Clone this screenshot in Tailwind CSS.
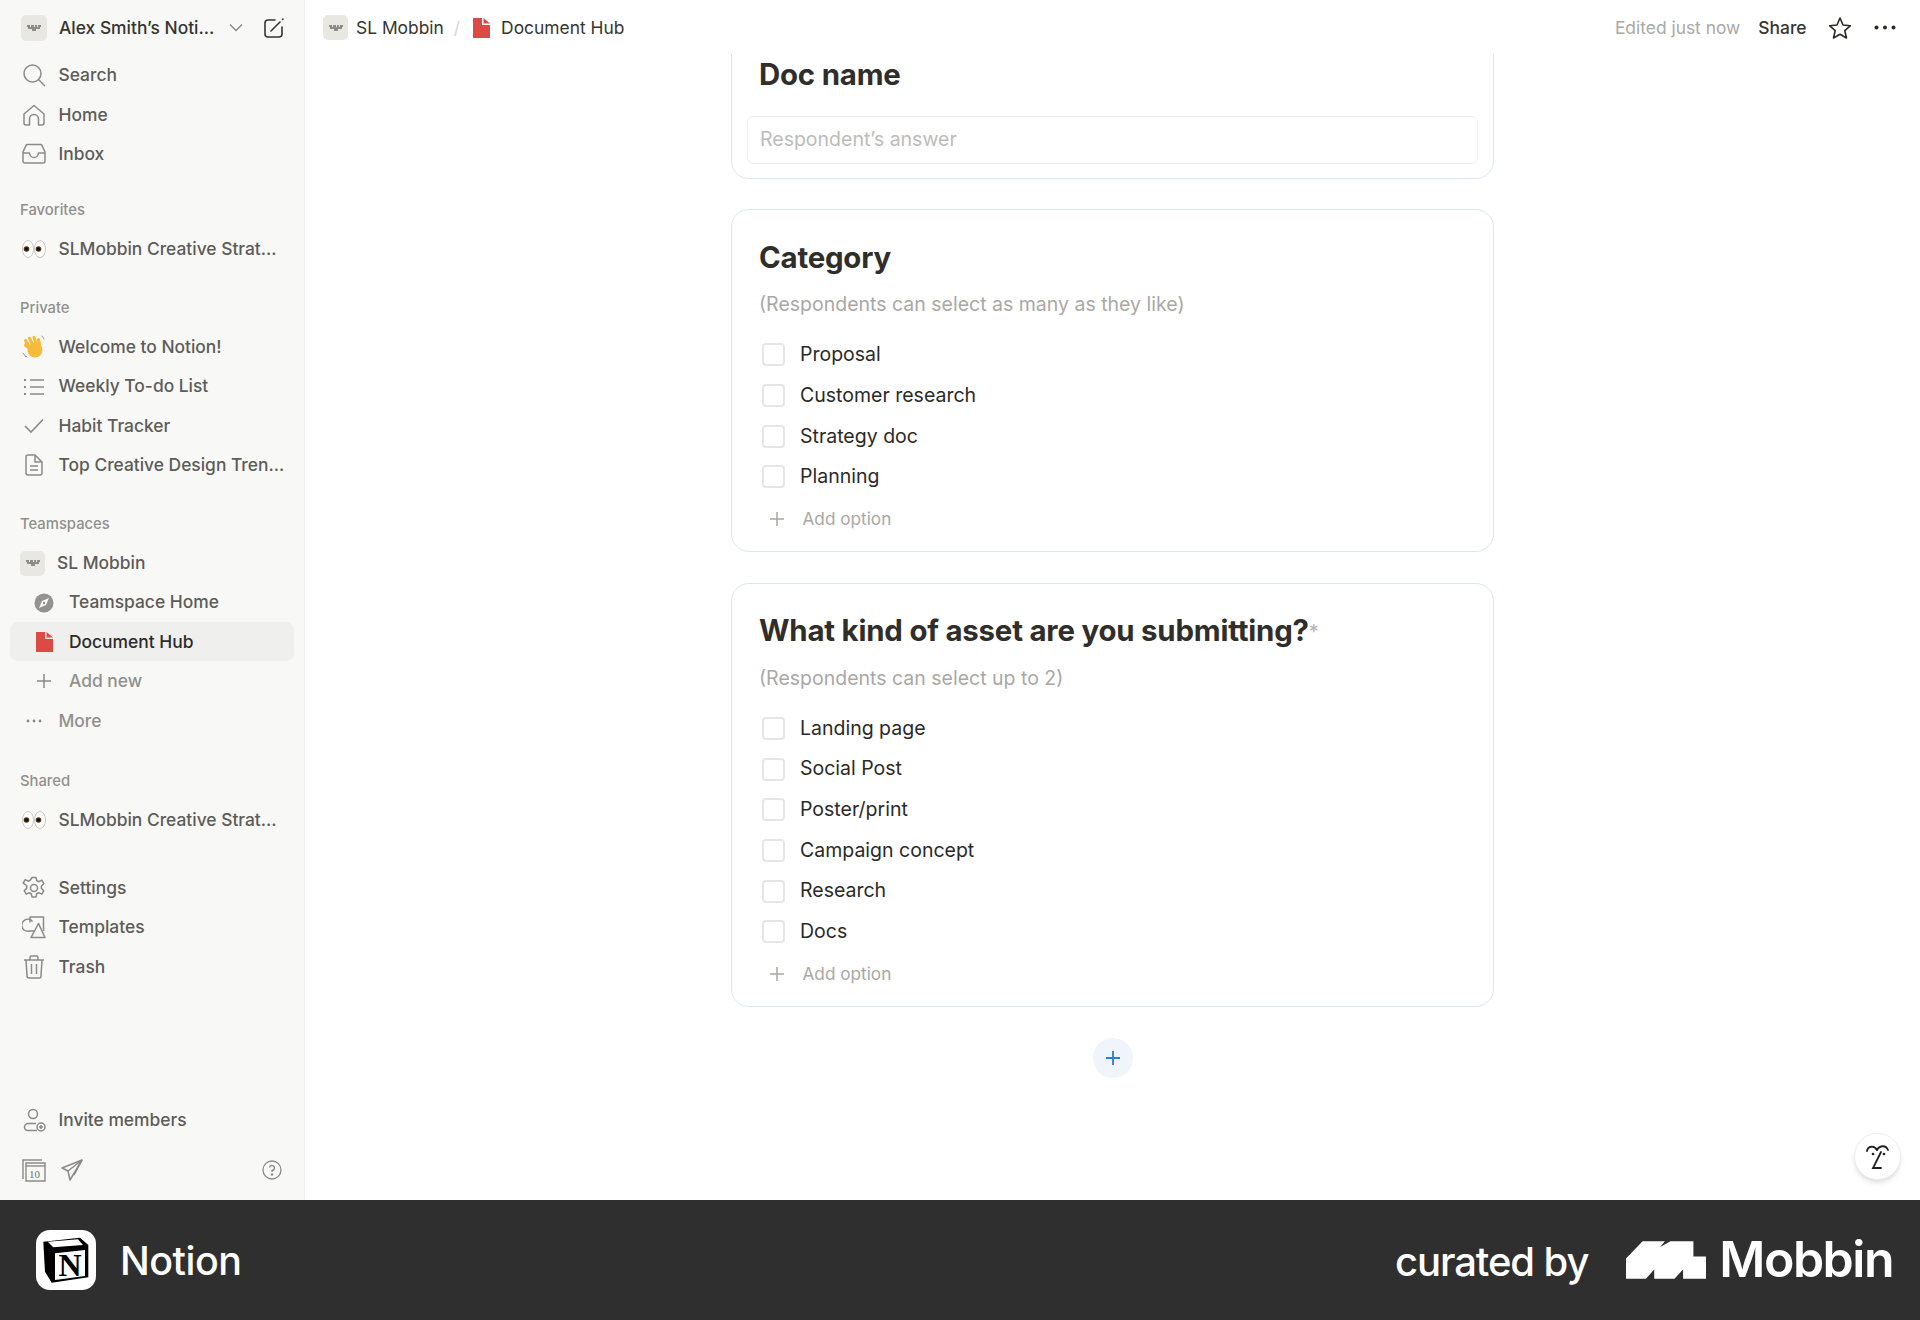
<!DOCTYPE html>
<html lang="en">
<head>
    <meta charset="UTF-8">
    <title>Document Hub</title>
    <script src="https://cdn.jsdelivr.net/npm/@tailwindcss/browser@4"></script>
</head>
<body class="font-['Inter',sans-serif] bg-white w-[1920px] h-[1320px] overflow-hidden flex flex-col antialiased">
<div class="flex h-[1200px]">
    <!-- sidebar -->
    <aside class="w-[305px] shrink-0 h-full bg-[#f8f8f7] border-r border-[#f1f1f0] flex flex-col text-[17.4px] font-medium text-[#5d5c58]">
        <div class="h-[55.500px] flex items-center pl-[21px] text-[#37352f]">
            <div class="w-[26px] h-[26px] rounded-[5px] bg-[#e8e7e1] flex items-center justify-center">
                <svg width="14" height="6" viewBox="0 0 14 6"><path d="M0 1h3M4 1h3M8 1h2M11 1h3M1 3h12M5 5h4" stroke="#333" stroke-width="1.2" fill="none"/></svg>
            </div>
            <span class="ml-[12px] w-[157px] whitespace-nowrap">Alex Smith’s Noti...</span>
            <svg class="ml-[13px]" width="14" height="9" viewBox="0 0 14 9" fill="none" stroke="#8b8a87" stroke-width="1.4"><path d="M1 1.5l6 6 6-6"/></svg>
            <svg class="ml-[20px]" width="22" height="22" viewBox="0 0 22 22" fill="none" stroke="#37352f" stroke-width="1.6" stroke-linecap="round"><path d="M12 3H5a3 3 0 0 0-3 3v11a3 3 0 0 0 3 3h11a3 3 0 0 0 3-3v-7"/><path d="M8 14L17 5"/><path d="M19.5 2.5l.5-.5"/></svg>
        </div>

        <a class="h-[39.6px] mx-[10px] pl-[10px] flex items-center gap-[10.5px]">
            <span class="w-[28px] flex justify-center"><svg width="24" height="24" viewBox="0 0 24 24" fill="none" stroke="#8b8a87" stroke-width="1.5"><circle cx="10.5" cy="10.5" r="8.5"/><path d="M16.5 16.5l6.5 6.5"/></svg></span>Search</a>
        <a class="h-[39.6px] mx-[10px] pl-[10px] flex items-center gap-[10.5px]">
            <span class="w-[28px] flex justify-center"><svg width="24" height="24" viewBox="0 0 24 24" fill="none" stroke="#8b8a87" stroke-width="1.5" stroke-linejoin="round"><path d="M2 11L12 2.5 22 11v9a2 2 0 0 1-2 2h-3.5v-6a4.5 4.5 0 0 0-9 0v6H4a2 2 0 0 1-2-2z"/></svg></span>Home</a>
        <a class="h-[39.6px] mx-[10px] pl-[10px] flex items-center gap-[10.5px]">
            <span class="w-[28px] flex justify-center"><svg width="24" height="24" viewBox="0 0 24 24" fill="none" stroke="#8b8a87" stroke-width="1.5" stroke-linejoin="round"><path d="M1 10l3-6.5a1.5 1.5 0 0 1 1.4-.9h13.2a1.5 1.5 0 0 1 1.4.9L23 10v9a2 2 0 0 1-2 2H3a2 2 0 0 1-2-2z"/><path d="M1 11h6.5c.5 3 2 4.5 4.5 4.5s4-1.500 4.500-4.500H23"/></svg></span>Inbox</a>

        <div class="mt-[16.300px] h-[39px] pl-[20px] flex items-center text-[14.8px] text-[#91908c]">Favorites</div>
        <a class="h-[39.2px] mx-[10px] pl-[10px] flex items-center gap-[10.5px]">
            <span class="w-[28px] flex justify-center"><svg width="26" height="22" viewBox="0 0 26 22"><ellipse cx="7" cy="11" rx="5.500" ry="8.500" fill="#fff" stroke="#c9c8c4" stroke-width="1"/><ellipse cx="19" cy="11" rx="5.500" ry="8.500" fill="#fff" stroke="#c9c8c4" stroke-width="1"/><circle cx="5.500" cy="11" r="2.800" fill="#5a3416"/><circle cx="5.500" cy="11" r="1.700" fill="#111"/><circle cx="17.500" cy="11" r="2.800" fill="#5a3416"/><circle cx="17.500" cy="11" r="1.700" fill="#111"/></svg></span>SLMobbin Creative Strat...</a>

        <div class="mt-[20px] h-[39px] pl-[20px] flex items-center text-[14.8px] text-[#91908c]">Private</div>
        <a class="h-[39.2px] mx-[10px] pl-[10px] flex items-center gap-[10.5px]">
            <span class="w-[28px] flex justify-center"><svg width="24" height="24" viewBox="0 0 24 24" fill="none" stroke-linecap="round"><path d="M6.500 10.500L3.500 5.500M10 8.500L7.500 3.500M14 8L12 2.500M17.500 9.500L16.500 4.500" stroke="#f7bb3c" stroke-width="3.200"/><ellipse cx="13" cy="15" rx="7.500" ry="7.500" fill="#f7bb3c"/><path d="M7 13L3.500 10" stroke="#f7bb3c" stroke-width="3.200"/><path d="M1 18l3 4M4 21l1 1M20 1l2 3" stroke="#9a9a96" stroke-width="1"/></svg></span>Welcome to Notion!</a>
        <a class="h-[39.2px] mx-[10px] pl-[10px] flex items-center gap-[10.5px]">
            <span class="w-[28px] flex justify-center"><svg width="22" height="18" viewBox="0 0 22 18" fill="none" stroke="#8b8a87" stroke-width="1.500"><path d="M7 2h14M7 9h14M7 16h14"/><path d="M1 2h2M1 9h2M1 16h2" stroke-width="2"/></svg></span>Weekly To-do List</a>
        <a class="h-[39.2px] mx-[10px] pl-[10px] flex items-center gap-[10.5px]">
            <span class="w-[28px] flex justify-center"><svg width="20" height="16" viewBox="0 0 20 16" fill="none" stroke="#8b8a87" stroke-width="1.600"><path d="M1 8l6 6L19 1.500"/></svg></span>Habit Tracker</a>
        <a class="h-[39.2px] mx-[10px] pl-[10px] flex items-center gap-[10.5px]">
            <span class="w-[28px] flex justify-center"><svg width="18" height="22" viewBox="0 0 18 22" fill="none" stroke="#8b8a87" stroke-width="1.500" stroke-linejoin="round"><path d="M3 1h7l7 7v11a2 2 0 0 1-2 2H3a2 2 0 0 1-2-2V3a2 2 0 0 1 2-2z"/><path d="M10 1v7h7M5 12h8M5 16h8"/></svg></span>Top Creative Design Tren...</a>

        <div class="mt-[20px] h-[39px] pl-[20px] flex items-center text-[14.8px] text-[#91908c]">Teamspaces</div>
        <a class="h-[39.2px] pl-[20px] flex items-center gap-[12px]">
            <span class="w-[25px] h-[25px] rounded-[5px] bg-[#e8e7e1] flex items-center justify-center"><svg width="14" height="6" viewBox="0 0 14 6"><path d="M0 1h3M4 1h3M8 1h2M11 1h3M1 3h12M5 5h4" stroke="#333" stroke-width="1.200" fill="none"/></svg></span>SL Mobbin</a>
        <a class="h-[39.6px] mx-[10px] pl-[24px] flex items-center gap-[15px]">
            <svg width="20" height="20" viewBox="0 0 20 20"><circle cx="10" cy="10" r="9.500" fill="#93928e"/><path d="M15 5l-7 3-3 7 7-3z" fill="#f8f8f7"/><circle cx="10" cy="10" r="1.200" fill="#93928e"/></svg>Teamspace Home</a>
        <a class="h-[39.2px] mx-[10px] pl-[26px] flex items-center gap-[16px] rounded-[8px] bg-[#efefee] text-[#2c2b28]">
            <svg width="17" height="20" viewBox="0 0 17 20"><path d="M0 0h9v7h8v13H0z" fill="#dc4a46"/><path d="M10.500 0L17 5.500h-6.500z" fill="#dc4a46"/></svg>Document Hub</a>
        <a class="h-[40px] mx-[10px] pl-[24px] flex items-center gap-[15px] text-[#91908c]">
            <svg width="20" height="20" viewBox="0 0 20 20" fill="none" stroke="#8b8a87" stroke-width="1.500"><path d="M10 3v14M3 10h14"/></svg>Add new</a>
        <a class="h-[40px] mx-[10px] pl-[10px] flex items-center gap-[10.5px] text-[#91908c]">
            <span class="w-[28px] flex justify-center"><svg width="16" height="4" viewBox="0 0 16 4" fill="#8b8a87"><circle cx="2" cy="2" r="1.400"/><circle cx="8" cy="2" r="1.400"/><circle cx="14" cy="2" r="1.400"/></svg></span>More</a>

        <div class="mt-[20px] h-[39px] pl-[20px] flex items-center text-[14.8px] text-[#91908c]">Shared</div>
        <a class="h-[39.2px] mx-[10px] pl-[10px] flex items-center gap-[10.5px]">
            <span class="w-[28px] flex justify-center"><svg width="26" height="22" viewBox="0 0 26 22"><ellipse cx="7" cy="11" rx="5.500" ry="8.500" fill="#fff" stroke="#c9c8c4" stroke-width="1"/><ellipse cx="19" cy="11" rx="5.500" ry="8.500" fill="#fff" stroke="#c9c8c4" stroke-width="1"/><circle cx="5.500" cy="11" r="2.800" fill="#5a3416"/><circle cx="5.500" cy="11" r="1.700" fill="#111"/><circle cx="17.500" cy="11" r="2.800" fill="#5a3416"/><circle cx="17.500" cy="11" r="1.700" fill="#111"/></svg></span>SLMobbin Creative Strat...</a>

        <a class="mt-[29px] h-[39.2px] mx-[10px] pl-[10px] flex items-center gap-[10.5px]">
            <span class="w-[28px] flex justify-center"><svg width="24" height="24" viewBox="0 0 24 24" fill="none" stroke="#8b8a87" stroke-width="1.500" stroke-linejoin="round"><circle cx="12" cy="12" r="3.500"/><path d="M10 1.500h4l.7 3.200 2.200 1 2.900-1.500 2 3.500-2.400 2.300v2.400l2.400 2.300-2 3.500-2.900-1.500-2.200 1-.7 3.200h-4l-.7-3.200-2.200-1-2.900 1.500-2-3.500 2.400-2.300V9.500L1.200 7.200l2-3.500 2.900 1.500 2.200-1z"/></svg></span>Settings</a>
        <a class="h-[39.2px] mx-[10px] pl-[10px] flex items-center gap-[10.5px]">
            <span class="w-[28px] flex justify-center"><svg width="24" height="24" viewBox="0 0 24 24" fill="none" stroke="#8b8a87" stroke-width="1.500" stroke-linejoin="round"><path d="M8 7.500V2h13.500v14"/><path d="M13.500 16H7.500a6 6 0 1 1 3-9.500"/><path d="M16.500 8.500l6.500 14H9z" fill="#f8f8f7"/></svg></span>Templates</a>
        <a class="h-[39.2px] mx-[10px] pl-[10px] flex items-center gap-[10.5px]">
            <span class="w-[28px] flex justify-center"><svg width="22" height="24" viewBox="0 0 22 24" fill="none" stroke="#8b8a87" stroke-width="1.500" stroke-linejoin="round"><path d="M1 5h20M7 5V2.500A1.500 1.500 0 0 1 8.500 1h5A1.500 1.500 0 0 1 15 2.500V5"/><path d="M3 5l1 16a2 2 0 0 0 2 2h10a2 2 0 0 0 2-2l1-16M8.500 9v10M13.500 9v10"/></svg></span>Trash</a>

        <a class="mt-auto h-[39.2px] mx-[10px] pl-[10px] flex items-center gap-[10.5px]">
            <span class="w-[28px] flex justify-center"><svg width="24" height="24" viewBox="0 0 24 24" fill="none" stroke="#8b8a87" stroke-width="1.500"><circle cx="11" cy="6" r="4.500"/><path d="M14 15.500H6a3.500 3.500 0 0 0 0 7h9"/><circle cx="19" cy="19" r="4"/><path d="M19 17v4M17 19h4"/></svg></span>Invite members</a>
        <div class="mt-[10px] mb-[10px] h-[40px] pl-[22px] pr-[22px] flex items-center">
            <svg width="24" height="24" viewBox="0 0 24 24" fill="none" stroke="#8b8a87" stroke-width="1.400"><path d="M1 21V2h19"/><path d="M4 5h19v18H4z"/><path d="M4 8h19"/><text x="7" y="20" font-family="Liberation Serif" font-size="11" fill="#6f6e6a" stroke="none">10</text></svg>
            <svg class="ml-[15px]" width="22" height="22" viewBox="0 0 22 22" fill="none" stroke="#8b8a87" stroke-width="1.500" stroke-linejoin="round"><path d="M21 1L1 9l6 3 2 9z"/><path d="M21 1L7 12M21 1L13 16"/></svg>
            <svg class="ml-auto" width="20" height="20" viewBox="0 0 20 20" fill="none" stroke="#8b8a87" stroke-width="1.300"><circle cx="10" cy="10" r="9"/><path d="M7.500 7.500A2.500 2.500 0 1 1 10 10.500V12"/><circle cx="10" cy="14.500" r=".6" fill="#8b8a87"/></svg>
        </div>
    </aside>

    <!-- main -->
    <main class="flex-1 h-full relative flex flex-col min-w-0">
        <header class="h-[54px] pt-[1.500px] shrink-0 bg-white flex items-center pl-[18px] pr-[24px] text-[17.4px] text-[#37352f] relative z-10">
            <span class="w-[25px] h-[25px] rounded-[5px] bg-[#e8e7e1] flex items-center justify-center"><svg width="14" height="6" viewBox="0 0 14 6"><path d="M0 1h3M4 1h3M8 1h2M11 1h3M1 3h12M5 5h4" stroke="#333" stroke-width="1.200" fill="none"/></svg></span>
            <span class="ml-[8px]">SL Mobbin</span>
            <span class="ml-[10px] text-[#d5d4d1]">/</span>
            <svg class="ml-[13px]" width="17" height="20" viewBox="0 0 17 20"><path d="M0 0h9v7h8v13H0z" fill="#dc4a46"/><path d="M10.500 0L17 5.500h-6.500z" fill="#dc4a46"/></svg>
            <span class="ml-[11px]">Document Hub</span>
            <span class="ml-auto text-[#aaa9a6]">Edited just now</span>
            <span class="ml-[18px] font-medium">Share</span>
            <svg class="ml-[21.500px]" width="24" height="24" viewBox="0 0 24 24" fill="none" stroke="#2b2a27" stroke-width="1.600" stroke-linejoin="round"><path d="M12 2l3 7 7.500.7-5.700 5 1.700 7.300L12 18.200 5.500 22l1.700-7.300-5.700-5L9 9z"/></svg>
            <svg class="ml-[22px]" width="22" height="5" viewBox="0 0 22 5" fill="#2b2a27"><circle cx="2.500" cy="2.500" r="2"/><circle cx="11" cy="2.500" r="2"/><circle cx="19.500" cy="2.500" r="2"/></svg>
        </header>

        <div class="flex-1 overflow-hidden">
            <div class="w-[763px] ml-[426px] -mt-[29px] text-[19.5px]">
                <section class="h-[154px] border border-[#d9e6f5] rounded-[18px] flex flex-col justify-end px-[15px] pb-[14.500px]">
                    <h2 class="px-[12px] text-[29.4px] leading-[36px] font-bold tracking-[-0.2px] text-[#2f2e2b] mb-[22.500px]">Doc name</h2>
                    <div class="h-[48px] border border-[#eeeeec] rounded-[6px] px-[12px] flex items-center text-[#bdbcb9]">Respondent’s answer</div>
                </section>

                <section class="mt-[30px] h-[343px] border border-[#d9e6f5] rounded-[18px] px-[27px] pt-[29.500px]">
                    <h2 class="text-[29.4px] leading-[36px] font-bold tracking-[-0.2px] text-[#2f2e2b]">Category</h2>
                    <p class="mt-[16.500px] leading-[24px] text-[#a9a8a5]">(Respondents can select as many as they like)</p>
                    <ul class="mt-[18.500px] text-[#2b2a27]">
                        <li class="h-[40.7px] flex items-center gap-[15px]"><span class="w-[23px] h-[23px] ml-[3px] rounded-[4px] border-2 border-[#e6e6e4]"></span>Proposal</li>
                        <li class="h-[40.7px] flex items-center gap-[15px]"><span class="w-[23px] h-[23px] ml-[3px] rounded-[4px] border-2 border-[#e6e6e4]"></span>Customer research</li>
                        <li class="h-[40.7px] flex items-center gap-[15px]"><span class="w-[23px] h-[23px] ml-[3px] rounded-[4px] border-2 border-[#e6e6e4]"></span>Strategy doc</li>
                        <li class="h-[40.7px] flex items-center gap-[15px]"><span class="w-[23px] h-[23px] ml-[3px] rounded-[4px] border-2 border-[#e6e6e4]"></span>Planning</li>
                    </ul>
                    <div class="mt-[1.500px] h-[40px] flex items-center pl-[8.500px] gap-[17px] text-[17.2px] text-[#a9a8a5]">
                        <svg width="18" height="18" viewBox="0 0 18 18" fill="none" stroke="#a9a8a5" stroke-width="1.500"><path d="M9 2v14M2 9h14"/></svg>Add option</div>
                </section>

                <section class="mt-[31px] h-[424px] border border-[#d9e6f5] rounded-[18px] px-[27px] pt-[29px]">
                    <h2 class="text-[29.4px] leading-[36px] font-bold tracking-[-0.2px] text-[#2f2e2b]">What kind of asset are you submitting?<sup class="text-[#b4b3b0] font-normal text-[20px] top-[-2px]">*</sup></h2>
                    <p class="mt-[17px] leading-[24px] text-[#a9a8a5]">(Respondents can select up to 2)</p>
                    <ul class="mt-[18px] text-[#2b2a27]">
                        <li class="h-[40.7px] flex items-center gap-[15px]"><span class="w-[23px] h-[23px] ml-[3px] rounded-[4px] border-2 border-[#e6e6e4]"></span>Landing page</li>
                        <li class="h-[40.7px] flex items-center gap-[15px]"><span class="w-[23px] h-[23px] ml-[3px] rounded-[4px] border-2 border-[#e6e6e4]"></span>Social Post</li>
                        <li class="h-[40.7px] flex items-center gap-[15px]"><span class="w-[23px] h-[23px] ml-[3px] rounded-[4px] border-2 border-[#e6e6e4]"></span>Poster/print</li>
                        <li class="h-[40.7px] flex items-center gap-[15px]"><span class="w-[23px] h-[23px] ml-[3px] rounded-[4px] border-2 border-[#e6e6e4]"></span>Campaign concept</li>
                        <li class="h-[40.7px] flex items-center gap-[15px]"><span class="w-[23px] h-[23px] ml-[3px] rounded-[4px] border-2 border-[#e6e6e4]"></span>Research</li>
                        <li class="h-[40.7px] flex items-center gap-[15px]"><span class="w-[23px] h-[23px] ml-[3px] rounded-[4px] border-2 border-[#e6e6e4]"></span>Docs</li>
                    </ul>
                    <div class="mt-[2px] h-[40px] flex items-center pl-[8.500px] gap-[17px] text-[17.2px] text-[#a9a8a5]">
                        <svg width="18" height="18" viewBox="0 0 18 18" fill="none" stroke="#a9a8a5" stroke-width="1.500"><path d="M9 2v14M2 9h14"/></svg>Add option</div>
                </section>

                <div class="mt-[31px] w-[40px] h-[40px] mx-auto rounded-full bg-[#eff5fb] flex items-center justify-center">
                    <svg width="18" height="18" viewBox="0 0 18 18" fill="none" stroke="#2b7fd0" stroke-width="1.800"><path d="M9 2v14M2 9h14"/></svg>
                </div>
            </div>
        </div>

        <!-- floating AI button -->
        <div class="absolute left-[1549px] top-[1133px] w-[47px] h-[47px] rounded-full bg-white border border-[#eeeeec] shadow-md flex items-center justify-center">
            <svg width="26" height="28" viewBox="0 0 26 28" fill="none" stroke="#1f1f1f" stroke-width="1.800" stroke-linecap="round"><path d="M2 8c1-5 7-6 10-1"/><path d="M12 7c3-5 9-5 11 0"/><path d="M16 9L8 25h8"/><circle cx="8" cy="11" r="1.300" fill="#1f1f1f" stroke="none"/><circle cx="19" cy="11" r="1.300" fill="#1f1f1f" stroke="none"/></svg>
        </div>
    </main>
</div>

<!-- footer bar -->
<footer class="h-[120px] bg-[#2f2f2f] flex items-center pl-[36px] pr-[27px] text-white">
    <svg width="60" height="60" viewBox="0 0 60 60">
        <rect width="60" height="60" rx="14" fill="#fff"/>
        <path d="M7.300 11.700L44 7.700 52.300 15V47.300L15.700 52.700 9 41.700z" fill="#000"/>
        <path d="M11.700 11.700L42 9.300 47 15 17.300 17.300z" fill="#fff"/>
        <path d="M19 23.300L49 20V46L19 50z" fill="#fff"/>
        <text x="34" y="45.500" text-anchor="middle" font-family="Liberation Serif" font-weight="700" font-size="32" fill="#000">N</text>
    </svg>
    <span class="ml-[24px] pt-[4px] text-[39.4px] font-medium tracking-[-0.5px]">Notion</span>
    <span class="ml-auto pt-[4px] text-[40px] font-medium tracking-[-1.1px]">curated by</span>
    <svg class="ml-[38px]" width="80" height="38" viewBox="80 30 241 113" fill="#fff"><path d="M80 143V82L130 30H197L183 47 214 30H283V76H321V143H252V115L226 143H165V115L140 143z"/></svg>
    <span class="ml-[13px] -mt-[2px] text-[50px] leading-none font-semibold tracking-[-1.500px]">Mobbin</span>
</footer>
</body>
</html>
